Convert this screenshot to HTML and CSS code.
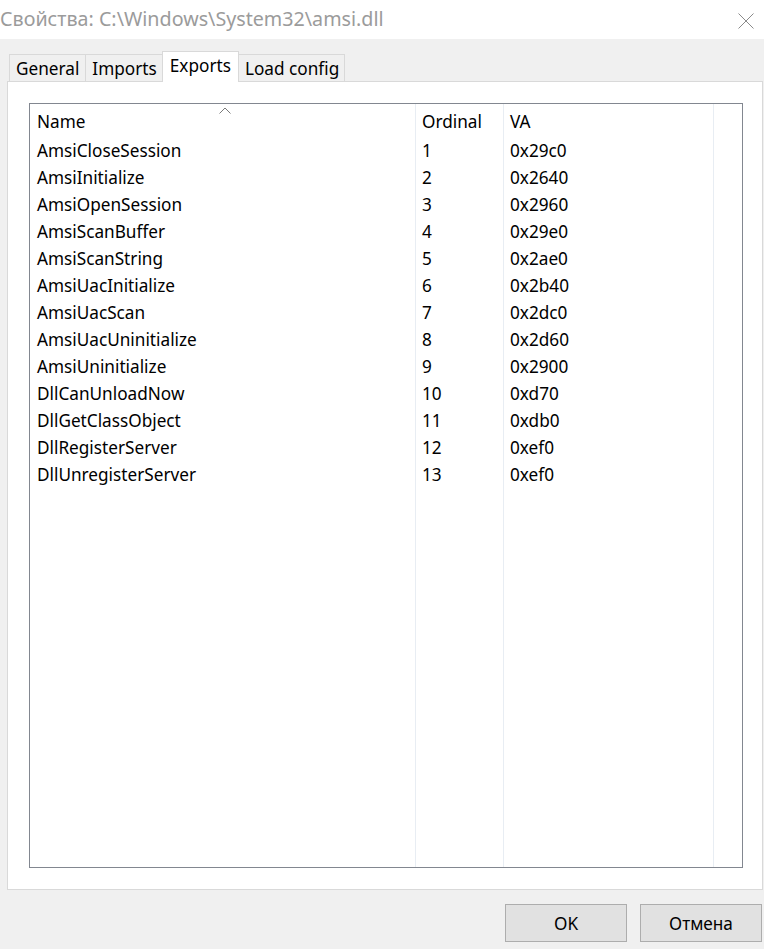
FILE: index.html
```html
<!DOCTYPE html>
<html>
<head>
<meta charset="utf-8">
<link rel="stylesheet" href="styles.css">
</head>
<body>
<div class="window">
  <div class="titlebar">
    <span class="title">Свойства: C:\Windows\System32\amsi.dll</span>
    <svg class="close" width="16" height="16" viewBox="0 0 16 16"><path d="M0.5 0.5 L15.5 15.5 M15.5 0.5 L0.5 15.5" stroke="#8a8a8a" stroke-width="1" fill="none"/></svg>
  </div>
  <div class="client">
    <div class="tabs">
      <div class="tab">General</div>
      <div class="tab">Imports</div>
      <div class="tab active">Exports</div>
      <div class="tab">Load config</div>
    </div>
    <div class="panel">
      <div class="list">
        <svg class="sort" width="12" height="7" viewBox="0 0 12 7"><path d="M0.5 6.5 L6 1 L11.5 6.5" stroke="#7a7a7a" fill="none"/></svg>
        <div class="col c-name">
          <div class="hd">Name</div>
          <div class="cell">AmsiCloseSession</div>
          <div class="cell">AmsiInitialize</div>
          <div class="cell">AmsiOpenSession</div>
          <div class="cell">AmsiScanBuffer</div>
          <div class="cell">AmsiScanString</div>
          <div class="cell">AmsiUacInitialize</div>
          <div class="cell">AmsiUacScan</div>
          <div class="cell">AmsiUacUninitialize</div>
          <div class="cell">AmsiUninitialize</div>
          <div class="cell">DllCanUnloadNow</div>
          <div class="cell">DllGetClassObject</div>
          <div class="cell">DllRegisterServer</div>
          <div class="cell">DllUnregisterServer</div>
        </div>
        <div class="col c-ord">
          <div class="hd">Ordinal</div>
          <div class="cell">1</div>
          <div class="cell">2</div>
          <div class="cell">3</div>
          <div class="cell">4</div>
          <div class="cell">5</div>
          <div class="cell">6</div>
          <div class="cell">7</div>
          <div class="cell">8</div>
          <div class="cell">9</div>
          <div class="cell">10</div>
          <div class="cell">11</div>
          <div class="cell">12</div>
          <div class="cell">13</div>
        </div>
        <div class="col c-va">
          <div class="hd">VA</div>
          <div class="cell">0x29c0</div>
          <div class="cell">0x2640</div>
          <div class="cell">0x2960</div>
          <div class="cell">0x29e0</div>
          <div class="cell">0x2ae0</div>
          <div class="cell">0x2b40</div>
          <div class="cell">0x2dc0</div>
          <div class="cell">0x2d60</div>
          <div class="cell">0x2900</div>
          <div class="cell">0xd70</div>
          <div class="cell">0xdb0</div>
          <div class="cell">0xef0</div>
          <div class="cell">0xef0</div>
        </div>
        <div class="col c-rest">
          <div class="hd"></div>
        </div>
      </div>
    </div>
    <div class="buttons">
      <button class="btn">OK</button>
      <button class="btn">Отмена</button>
    </div>
  </div>
</div>
</body>
</html>
```
FILE: styles.css
```css
html, body {
  margin: 0;
  padding: 0;
  background: #f0f0f0;
}
body {
  font-family: "Noto Sans", "Liberation Sans", sans-serif;
  font-size: 17.2px;
  color: #000;
}
.window {
  width: 764px;
  height: 949px;
  display: flex;
  flex-direction: column;
  overflow: hidden;
}
.titlebar {
  height: 39px;
  background: #fff;
  display: flex;
  align-items: center;
  justify-content: space-between;
  flex-shrink: 0;
}
.title {
  font-size: 19.7px;
  color: #9b9b9b;
  padding-left: 0;
  margin-top: -2px;
  white-space: nowrap;
}
.close {
  margin-right: 10px;
  margin-top: 2px;
}
.client {
  flex: 1;
  display: flex;
  flex-direction: column;
}
.tabs {
  display: flex;
  align-items: flex-end;
  padding-left: 9px;
  margin-top: 12px;
  height: 30px;
  position: relative;
  z-index: 1;
}
.tab {
  height: 27px;
  box-sizing: border-box;
  border: 1px solid #d9d9d9;
  border-bottom: none;
  background: #f0f0f0;
  padding: 0 6px;
  line-height: 27px;
  white-space: nowrap;
  margin-right: -1px;
}
.tab:last-child {
  padding-right: 5px;
}
.tab.active {
  height: 31px;
  background: #fff;
  line-height: 27px;
  margin-bottom: -1px;
  margin-left: -1px;
  margin-right: -1px;
  padding: 0 7px;
  position: relative;
}
.panel {
  margin: 0 1px 0 7px;
  height: 809px;
  box-sizing: border-box;
  background: #fff;
  border: 1px solid #d9d9d9;
  padding: 21px 19px 0 21px;
}
.list {
  position: relative;
  height: 765px;
  box-sizing: border-box;
  border: 1px solid #828790;
  display: flex;
  background: #fff;
}
.sort {
  position: absolute;
  left: 189px;
  top: 3px;
}
.col {
  box-sizing: border-box;
  border-right: 1px solid #e8edf3;
  display: flex;
  flex-direction: column;
}
.c-name { width: 386px; }
.c-ord { width: 88px; }
.c-va { width: 210px; }
.c-rest { flex: 1; border-right: none; }
.hd {
  height: 33px;
  line-height: 35px;
  padding-left: 7px;
  white-space: nowrap;
}
.cell {
  height: 27px;
  line-height: 27px;
  padding-left: 7px;
  white-space: nowrap;
}
.c-ord .hd, .c-ord .cell { padding-left: 6px; }
.c-va .hd, .c-va .cell { padding-left: 6px; }
.buttons {
  display: flex;
  justify-content: flex-end;
  gap: 13px;
  padding: 14px 2px 0 0;
}
.btn {
  width: 122px;
  height: 38px;
  box-sizing: border-box;
  background: #e1e1e1;
  border: 1px solid #adadad;
  font-family: "Noto Sans", "Liberation Sans", sans-serif;
  font-size: 17.2px;
  color: #000;
  padding: 0;
  margin: 0;
}
```
